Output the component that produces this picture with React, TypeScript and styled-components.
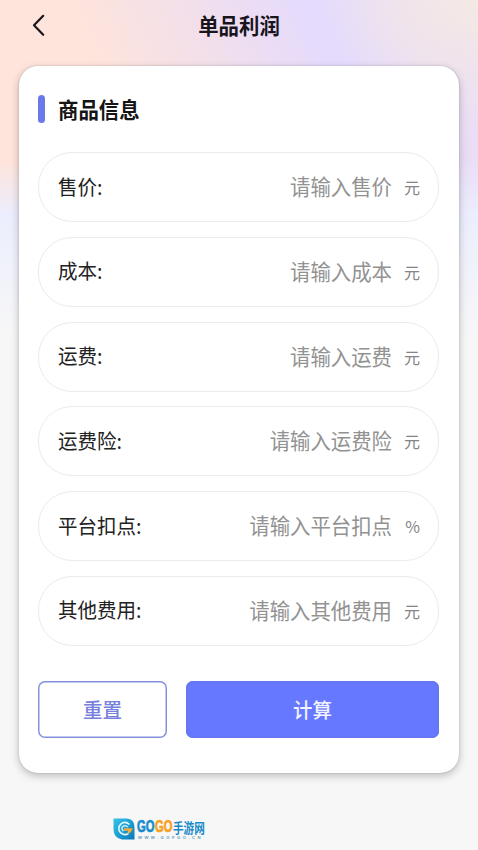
import React from "react";
import styled, { createGlobalStyle } from "styled-components";

const GlobalStyle = createGlobalStyle`
  * { box-sizing: border-box; }
  html, body { margin: 0; padding: 0; }
  body { background: #f7f7f7; font-family: "Noto Sans CJK SC", "Noto Sans", sans-serif; }
`;

const Screen = styled.main`
  width: 478px;
  height: 850px;
  display: flex;
  flex-direction: column;
  overflow: hidden;
  background:
    linear-gradient(180deg, rgba(236, 238, 253, 0) 160px, #ecedfd 214px, #eff1fb 250px, #f7f7f8 335px, #f7f7f7 100%),
    radial-gradient(ellipse 170px 130px at 478px 0, #f5e9e4 0%, rgba(245, 233, 228, 0) 100%),
    linear-gradient(66deg, #ffe4db 0%, #ffe4db 28%, #f4e0e8 46%, #e3daff 72%, #eadef5 87%, #eadcf6 100%) 0 0 / 478px 215px no-repeat;
`;

const TopBar = styled.header`
  height: 50px;
  flex: none;
  display: grid;
  grid-template-columns: 78px 1fr 78px;
  align-items: center;
`;

const BackButton = styled.button`
  border: 0;
  background: none;
  height: 50px;
  display: flex;
  align-items: center;
  padding: 0 0 1px 31px;
`;

const Title = styled.h1`
  margin: 0 0 1px;
  text-align: center;
  font-size: 20.4px;
  line-height: 30px;
  font-weight: 700;
  color: #18151d;
  transform: scaleY(1.04);
`;

const Card = styled.section`
  width: 440px;
  height: 707px;
  flex: none;
  margin: 16px 0 0 19px;
  padding: 28px 20px 0 19px;
  background: #fff;
  border-radius: 19px;
  box-shadow: 0 3px 8px rgba(0, 0, 0, 0.24), 0 0 2px rgba(0, 0, 0, 0.2);
`;

const SectionHead = styled.div`
  height: 30px;
  display: flex;
  align-items: center;
  gap: 13px;
`;

const Accent = styled.i`
  width: 7px;
  height: 28px;
  border-radius: 3.5px;
  background: #6979ea;
`;

const SectionTitle = styled.h2`
  margin: 0;
  font-size: 20.4px;
  line-height: 30px;
  font-weight: 700;
  color: #151515;
  transform: scaleY(1.04);
`;

const Fields = styled.div`
  margin-top: 28px;
  display: grid;
  grid-auto-rows: 70px;
  row-gap: 14.8px;
`;

const Field = styled.label`
  display: flex;
  align-items: center;
  padding: 0 18px 0 19px;
  border: 1px solid #ebebeb;
  border-radius: 34px;
`;

const Label = styled.span`
  margin-bottom: 1px;
  font-size: 19.5px;
  line-height: 30px;
  color: #222;
  transform: scaleY(1.06);
`;

const Placeholder = styled.span`
  margin: 0 0 2px auto;
  font-size: 20.4px;
  line-height: 30px;
  color: #929292;
  transform: scaleY(1.04);
`;

const Unit = styled.span`
  width: 16px;
  margin-left: 12px;
  text-align: right;
  font-size: 16px;
  line-height: 24px;
  color: #858585;
`;

const Actions = styled.div`
  margin-top: 35px;
  display: grid;
  grid-template-columns: 129px 253px;
  justify-content: space-between;
  height: 57px;
`;

const ActionButton = styled.button<{ $primary?: boolean }>`
  font: 500 19.5px/30px "Noto Sans CJK SC", sans-serif;
  padding: 2px 0 0;
  border-radius: 7px;
  border: 0;
  box-shadow: inset 0 0 0 1.5px ${(p) => (p.$primary ? "#6576ee" : "#8491dc")};
  background: ${(p) => (p.$primary ? "#6678ff" : "#fff")};
  color: ${(p) => (p.$primary ? "#f1f3ff" : "#7780dc")};
`;

const ButtonText = styled.span`
  display: inline-block;
  transform: scaleY(1.04);
`;

const Brand = styled.footer`
  margin: 45px 0 0 113px;
  display: flex;
  gap: 2px;
  height: 23px;
`;

const BrandText = styled.div`
  display: flex;
  flex-direction: column;
  width: 69px;
  padding-top: 1px;
`;

const BrandName = styled.div`
  display: flex;
  align-items: center;
  height: 16px;
  white-space: nowrap;
`;

const Latin = styled.span<{ $warm?: boolean }>`
  width: 18px;
  flex: none;
  font: 700 17px/16px "Liberation Sans", sans-serif;
  color: ${(p) => (p.$warm ? "#f9a11b" : "#168ccb")};
  -webkit-text-stroke: 0.7px currentColor;
  transform: scaleX(0.66);
  transform-origin: left center;
`;

const Hanzi = styled.span`
  font-size: 10.6px;
  line-height: 13px;
  font-weight: 700;
  color: #168ac8;
  transform: translateY(-0.5px) scaleY(1.25);
`;

const BrandUrl = styled.span`
  padding-left: 1px;
  font: 700 4.2px/5px "Liberation Sans", sans-serif;
  letter-spacing: 2.45px;
  white-space: nowrap;
  color: #609fbd;
`;

const fields = [
  { name: "售价", unit: "元" },
  { name: "成本", unit: "元" },
  { name: "运费", unit: "元" },
  { name: "运费险", unit: "元" },
  { name: "平台扣点", unit: "%" },
  { name: "其他费用", unit: "元" },
];

function BackIcon() {
  return (
    <svg width="15" height="24" viewBox="0 0 15 24" fill="none">
      <path d="M12.2 2.8 3 12.2 12.2 21.8" stroke="#18151d" strokeWidth="2.2" strokeLinecap="round" strokeLinejoin="round" />
    </svg>
  );
}

function BrandMark() {
  return (
    <svg width="22" height="22" viewBox="0 0 22 22" fill="none">
      <defs>
        <linearGradient id="mark" x1="0" y1="0" x2="1" y2="1">
          <stop stopColor="#35c3ea" />
          <stop offset="1" stopColor="#0879bd" />
        </linearGradient>
      </defs>
      <path d="M.5 .5H14Q21.5 1 21.5 9V21.5H9Q.5 20 .5 11Z" fill="url(#mark)" />
      <path d="M16.5 6.5Q12 2.5 7.8 6Q3.8 10.5 7.5 14.7Q11 18 15.5 15.5" stroke="#e7faff" strokeWidth="1.6" />
      <path d="M15 9Q12 6.5 9.5 8.7Q8 11.5 10.5 13.2" stroke="#c9f1fb" strokeWidth="1.4" />
      <path d="M11 10.2H19.5Q19 14.5 14 16L15.2 12.8H11Z" fill="#f9ad35" />
    </svg>
  );
}

export default function App() {
  return (
    <>
      <GlobalStyle />
      <Screen>
        <TopBar>
          <BackButton aria-label="返回"><BackIcon /></BackButton>
          <Title>单品利润</Title>
        </TopBar>
        <Card>
          <SectionHead>
            <Accent />
            <SectionTitle>商品信息</SectionTitle>
          </SectionHead>
          <Fields>
            {fields.map(({ name, unit }) => (
              <Field key={name}>
                <Label>{name}:</Label>
                <Placeholder>请输入{name}</Placeholder>
                <Unit>{unit}</Unit>
              </Field>
            ))}
          </Fields>
          <Actions>
            <ActionButton><ButtonText>重置</ButtonText></ActionButton>
            <ActionButton $primary><ButtonText>计算</ButtonText></ActionButton>
          </Actions>
        </Card>
        <Brand>
          <BrandMark />
          <BrandText>
            <BrandName>
              <Latin>GO</Latin>
              <Latin $warm>GO</Latin>
              <Hanzi>手游网</Hanzi>
            </BrandName>
            <BrandUrl>WWW.GOFGO.CN</BrandUrl>
          </BrandText>
        </Brand>
      </Screen>
    </>
  );
}
